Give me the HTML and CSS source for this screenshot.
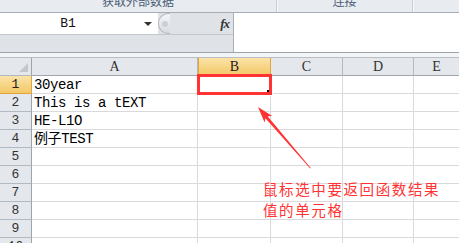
FILE: index.html
```html
<!DOCTYPE html>
<html lang="zh-CN">
<head>
    <meta charset="UTF-8">
    <title>Excel 选中单元格</title>
    <link rel="stylesheet" href="styles.css">
</head>
<body>
    <div class="ribbon">
        <div class="group group-data"><span>获取外部数据</span></div>
        <div class="group group-conn"><span>连接</span></div>
        <div class="group group-rest"></div>
    </div>

    <div class="formula-bar">
        <div class="formula-left">
            <div class="name-row">
                <div class="name-box">
                    <span class="name-text">B1</span>
                    <span class="caret"></span>
                </div>
                <div class="grip"><span class="grip-dot"></span></div>
                <div class="fx">fx</div>
            </div>
        </div>
        <div class="formula-input"></div>
    </div>
    <div class="gap"></div>

    <div class="sheet">
        <div class="row head">
            <div class="cell rh corner"></div>
            <div class="cell ch">A</div>
            <div class="cell ch sel">B</div>
            <div class="cell ch">C</div>
            <div class="cell ch">D</div>
            <div class="cell ch last">E</div>
        </div>
        <div class="row">
            <div class="cell rh sel">1</div>
            <div class="cell a">30year</div>
            <div class="cell b active"><span class="handle"></span></div>
            <div class="cell"></div>
            <div class="cell"></div>
            <div class="cell last"></div>
        </div>
        <div class="row">
            <div class="cell rh">2</div>
            <div class="cell a">This is a tEXT</div>
            <div class="cell"></div>
            <div class="cell"></div>
            <div class="cell"></div>
            <div class="cell last"></div>
        </div>
        <div class="row">
            <div class="cell rh">3</div>
            <div class="cell a">HE-L1O</div>
            <div class="cell"></div>
            <div class="cell"></div>
            <div class="cell"></div>
            <div class="cell last"></div>
        </div>
        <div class="row">
            <div class="cell rh">4</div>
            <div class="cell a">例子TEST</div>
            <div class="cell"></div>
            <div class="cell"></div>
            <div class="cell"></div>
            <div class="cell last"></div>
        </div>
        <div class="row">
            <div class="cell rh">5</div>
            <div class="cell a"></div>
            <div class="cell"></div>
            <div class="cell"></div>
            <div class="cell"></div>
            <div class="cell last"></div>
        </div>
        <div class="row">
            <div class="cell rh">6</div>
            <div class="cell a"></div>
            <div class="cell"></div>
            <div class="cell"></div>
            <div class="cell"></div>
            <div class="cell last"></div>
        </div>
        <div class="row">
            <div class="cell rh">7</div>
            <div class="cell a"></div>
            <div class="cell"></div>
            <div class="cell"></div>
            <div class="cell"></div>
            <div class="cell last"></div>
        </div>
        <div class="row">
            <div class="cell rh">8</div>
            <div class="cell a"></div>
            <div class="cell"></div>
            <div class="cell"></div>
            <div class="cell"></div>
            <div class="cell last"></div>
        </div>
        <div class="row">
            <div class="cell rh">9</div>
            <div class="cell a"></div>
            <div class="cell"></div>
            <div class="cell"></div>
            <div class="cell"></div>
            <div class="cell last"></div>
        </div>
        <div class="row">
            <div class="cell rh">10</div>
            <div class="cell a"></div>
            <div class="cell"></div>
            <div class="cell"></div>
            <div class="cell"></div>
            <div class="cell last"></div>
        </div>
    </div>

    <!-- annotation layer -->
    <div class="mark-box"></div>
    <svg class="arrow" width="459" height="243" viewBox="0 0 459 243">
        <polygon points="258,107 272.2,116 267.6,116.3 310.8,168 310.2,168.4 265.4,118.3 264.6,122.5" fill="#f33"/>
    </svg>
    <div class="note">
        <div>鼠标选中要返回函数结果</div>
        <div>值的单元格</div>
    </div>
</body>
</html>
```

FILE: styles.css
```css
:root {
    --header: #e4e7ec;
    --header-line: #b3b9c1;
    --grid: #d9dadc;
    --red: #f33;
}

body {
    margin: 0;
    width: 459px;
    height: 243px;
    overflow: hidden;
    background: #fff;
    position: relative;
    font-family: 'Liberation Mono', 'Noto Sans CJK SC', monospace;
}

/* ribbon leftovers */
.ribbon {
    display: flex;
    height: 12px;
    background: #e8ebef;
    border-bottom: 1px solid #a7adb5;
    overflow: hidden;
}

.group {
    text-align: center;
    border-right: 1px solid #c9ced4;
    box-shadow: 1px 0 0 #f7f8fa;
}

.group span {
    display: block;
    margin-top: -7px;
    font-family: 'Noto Sans CJK SC', sans-serif;
    font-size: 12px;
    line-height: 16px;
    color: #4a5d78;
}

.group-data { width: 276px; }
.group-conn { width: 135px; }
.group-rest { flex: 1; border-right: none; }

/* formula bar */
.formula-bar {
    display: flex;
    height: 39px;
    border-bottom: 1px solid #9da4ac;
}

.formula-left {
    width: 233px;
    background: #dfe3e8;
    border-right: 1px solid #a9afb7;
}

.name-row {
    display: flex;
    align-items: center;
    height: 21px;
    border-bottom: 1px solid #c3c8cf;
}

.name-box {
    width: 158px;
    height: 21px;
    background: #fff;
    display: flex;
    align-items: center;
}

.name-text {
    flex: 1;
    text-align: center;
    font-size: 13px;
    padding-right: 8px;
    color: #111;
}

.caret {
    width: 0;
    height: 0;
    border-left: 4px solid transparent;
    border-right: 4px solid transparent;
    border-top: 4px solid #333;
    margin-right: 6px;
}

.grip {
    width: 11px;
    height: 19px;
    border: 1px solid #b3b9c0;
    border-right: none;
    border-radius: 10px 0 0 10px;
    background: linear-gradient(#f4f5f7, #d8dce1);
    display: flex;
    align-items: center;
}

.grip-dot {
    width: 6px;
    height: 6px;
    margin-left: 3px;
    border-radius: 50%;
    background: #ccd0d5;
}

.fx {
    margin-left: auto;
    margin-right: 4px;
    font-family: 'Liberation Serif', serif;
    font-style: italic;
    font-weight: bold;
    font-size: 13px;
    letter-spacing: -1px;
    color: #333;
}

.formula-input {
    flex: 1;
    background: #fff;
}

.gap {
    height: 4px;
    background: #f3f4f6;
    border-bottom: 1px solid #b9bec5;
}

/* sheet */
.row {
    display: flex;
    height: 18px;
}

.cell {
    box-sizing: border-box;
    height: 18px;
    border-right: 1px solid var(--grid);
    border-bottom: 1px solid var(--grid);
    font-size: 14px;
    line-height: 18px;
    color: #000;
    white-space: nowrap;
}

.cell:nth-child(1) { width: 32px; }
.cell:nth-child(2) { width: 166px; }
.cell:nth-child(3) { width: 73px; }
.cell:nth-child(4) { width: 72px; }
.cell:nth-child(5) { width: 71px; }
.cell:nth-child(6) { flex: 1; border-right: none; }

.rh, .ch {
    background: var(--header);
    text-align: center;
    font-size: 13px;
    color: #333;
    border-color: var(--header-line);
}

.rh {
    border-right-color: #9ea5ad;
}

.ch {
    font-family: 'Liberation Serif', serif;
    font-size: 14px;
    border-bottom-color: #9ea5ad;
}

.corner {
    position: relative;
}

.corner::after {
    content: '';
    position: absolute;
    right: 3px;
    bottom: 3px;
    border-left: 9px solid transparent;
    border-bottom: 9px solid #c3c8ce;
}

.sel {
    background: linear-gradient(#fbe3a8, #f3c867);
    border-color: #e2a53c;
    color: #222;
}

.ch.sel {
    border-left: 1px solid #e2a53c;
    border-bottom-color: #e29a2a;
}

.a {
    padding-left: 2px;
    letter-spacing: -0.4px;
}

.active {
    position: relative;
    border-bottom: 2px solid #000;
}

.handle {
    position: absolute;
    right: -3px;
    bottom: -4px;
    width: 5px;
    height: 5px;
    background: #000;
    border: 1px solid #fff;
}

/* annotation */
.mark-box {
    position: absolute;
    left: 197px;
    top: 74px;
    width: 69px;
    height: 15px;
    border: 3px solid var(--red);
}

.arrow {
    position: absolute;
    left: 0;
    top: 0;
    pointer-events: none;
}

.note {
    position: absolute;
    left: 263px;
    top: 178px;
    display: flex;
    flex-direction: column;
    font-family: 'Noto Sans CJK SC', sans-serif;
    font-size: 14.5px;
    letter-spacing: 1.6px;
    line-height: 21px;
    color: var(--red);
}
```
